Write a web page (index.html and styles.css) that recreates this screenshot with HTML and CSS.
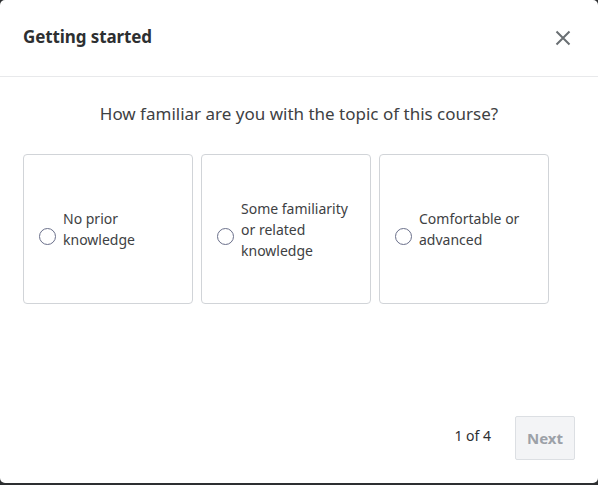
FILE: index.html
```html
<!DOCTYPE html>
<html>
<head>
<meta charset="utf-8">
<link rel="stylesheet" href="styles.css">
</head>
<body>
<div class="dialog">
  <header class="header">
    <h1 class="title">Getting started</h1>
    <button class="close" aria-label="Close">
      <svg width="16" height="16" viewBox="0 0 16 16"><path d="M1.5 1.5 L14.5 14.5 M14.5 1.5 L1.5 14.5" stroke="#6a6f73" stroke-width="2" fill="none"/></svg>
    </button>
  </header>
  <main class="body">
    <p class="question">How familiar are you with the topic of this course?</p>
    <div class="options">
      <label class="option"><span class="radio"></span><span class="label">No prior knowledge</span></label>
      <label class="option"><span class="radio"></span><span class="label">Some familiarity or related knowledge</span></label>
      <label class="option"><span class="radio"></span><span class="label">Comfortable or advanced</span></label>
    </div>
  </main>
  <footer class="footer">
    <span class="count">1 of 4</span>
    <button class="next">Next</button>
  </footer>
</div>
</body>
</html>
```
FILE: styles.css
```css
html, body {
  margin: 0;
  padding: 0;
  background: #2d2f31;
  font-family: "Noto Sans", "Open Sans", sans-serif;
}
.dialog {
  width: 598px;
  height: 483px;
  background: #fff;
  border-radius: 5px;
  display: flex;
  flex-direction: column;
  box-sizing: border-box;
}
.header {
  height: 77px;
  box-sizing: border-box;
  border-bottom: 1px solid #e8e9eb;
  display: flex;
  align-items: center;
  justify-content: space-between;
  padding: 0 27px 2px 23px;
}
.title {
  margin: 0 0 2px;
  font-size: 17px;
  font-weight: 700;
  color: #2d2f31;
  letter-spacing: -0.1px;
}
.close {
  border: 0;
  background: none;
  padding: 0;
  width: 16px;
  height: 16px;
  margin-top: 2px;
  display: flex;
}
.body {
  flex: 1;
  padding: 0 23px;
}
.question {
  margin: 25px 0 0;
  text-align: center;
  font-size: 17px;
  color: #3e4143;
  line-height: 24px;
}
.options {
  display: flex;
  gap: 8px;
  margin-top: 28px;
}
.option {
  width: 170px;
  height: 150px;
  box-sizing: border-box;
  border: 1px solid #d1d4d8;
  border-radius: 4px;
  display: flex;
  align-items: center;
  padding: 0 15px;
  gap: 7px;
}
.radio {
  flex: none;
  width: 17px;
  height: 17px;
  box-sizing: border-box;
  border: 1px solid #6a6f8a;
  border-radius: 50%;
  margin-top: 14px;
}
.label {
  font-size: 14px;
  line-height: 21px;
  color: #3e4143;
}
.footer {
  display: flex;
  align-items: center;
  justify-content: flex-end;
  padding: 0 23px 23px;
  gap: 24px;
}
.count {
  font-size: 14px;
  color: #2d2f31;
  margin-bottom: 6px;
}
.next {
  width: 60px;
  height: 44px;
  border: 1px solid #dcdfe3;
  background: #f3f4f6;
  border-radius: 2px;
  font-family: inherit;
  font-size: 15px;
  font-weight: 700;
  color: #9ca1a8;
  padding: 0;
}
```
